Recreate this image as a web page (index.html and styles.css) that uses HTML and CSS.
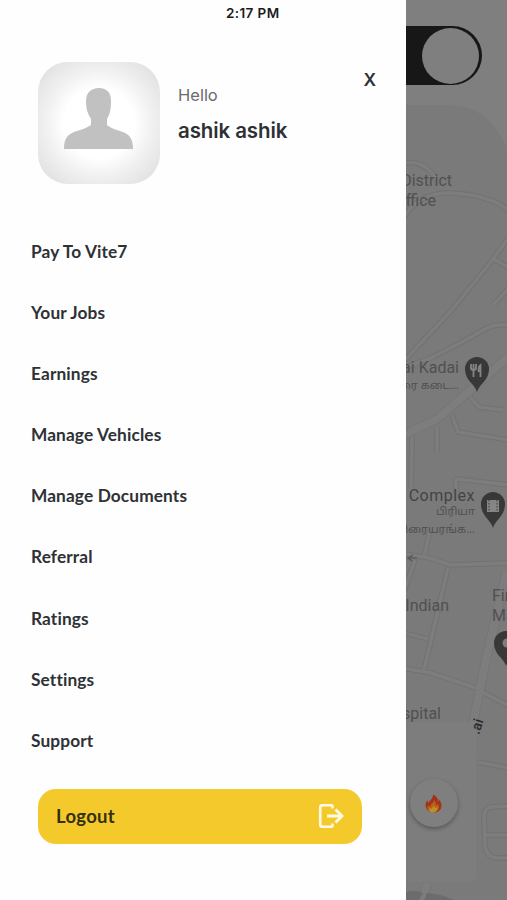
FILE: index.html
```
<!DOCTYPE html>
<html lang="en">
<head>
<meta charset="utf-8">
<title>Menu</title>
<link rel="stylesheet" href="styles.css">
</head>
<body>
<div class="screen">
  <aside class="drawer">
    <div class="status">2:17 PM</div>
    <header class="profile">
      <svg class="avatar" viewBox="0 0 122 122">
        <defs><radialGradient id="glow" r="0.6"><stop offset="0.48" stop-color="#fff"/><stop offset="0.7" stop-color="#f2f2f2"/><stop offset="1" stop-color="#e3e3e3"/></radialGradient></defs>
        <rect width="122" height="122" rx="30" fill="url(#glow)"/>
        <path fill="#c1c1c1" d="M61 26c8 0 12 5 12 13 0 8-1 13-4 18v6c3 3 10 5 16 7 7 3 10 7 10 17H26c0-10 3-14 10-17 6-2 13-4 17-7v-6c-3-5-5-10-5-18 0-8 5-13 13-13z"/>
      </svg>
      <div class="who">
        <span class="hello">Hello</span>
        <span class="name">ashik ashik</span>
      </div>
      <button class="close">X</button>
    </header>
    <nav class="menu">
      <a class="item">Pay To Vite7</a>
      <a class="item">Your Jobs</a>
      <a class="item">Earnings</a>
      <a class="item">Manage Vehicles</a>
      <a class="item">Manage Documents</a>
      <a class="item">Referral</a>
      <a class="item">Ratings</a>
      <a class="item">Settings</a>
      <a class="item">Support</a>
    </nav>
    <button class="logout">
      <span>Logout</span>
      <svg class="exit" viewBox="0 0 26 26" fill="none" stroke="#fffbe6" stroke-width="2.8">
        <path d="M14.5 2.2H4.5Q2.2 2.2 2.2 4.5v17q0 2.300 2.300 2.300h10M14.500 2v3.500M14.500 24v-3.500" stroke-width="2.600"/>
        <path d="M9 13h15M17.500 6.500 24 13l-6.500 6.500"/>
      </svg>
    </button>
  </aside>
  <main class="backdrop">
    <svg class="map" viewBox="406 0 101 900">
      <defs>
        <g id="roads" fill="none" stroke-linejoin="round">
          <path d="M404 163q22-3 32 17M404 217q14-23 43-24 28 1 39 6 16 4 24 14"/>
          <path d="M404 361 450 312 490 263 510 236M494 259l15 9M493 305l16-17"/>
          <path d="M404 368l29-11 27-14 27-15q8-4 22-3"/>
          <path d="M470 397l9 10 24 3M452 415l6 17 51 8M437 427v26M412 437l-1 50"/>
          <path d="M456 494v-15l53 6M404 554l26 4 20 7 59-2M430 530l-6 27M415 560l-11 31M448 568l-24 102M404 633l24 6"/>
          <path d="M404 668l27 5 42 14 36 19M478 762l31 6"/>
          <path d="M509 806l-17 1q-7 0-8 8l1 30q1 12 11 13h13M486 835h23"/>
        </g>
        <g id="avenues" fill="none">
          <path d="M404 435l33-16 30-26 23-20 19-17M507 570l-20 85-17 83M428 883l-8 20"/>
        </g>
      </defs>
      <rect x="406" width="101" height="900" fill="#7f7f7f"/>
      <path d="M406 105h41q42 0 60 43v752H406z" fill="#7a7a7a"/>
      <use href="#roads" stroke="#727272" stroke-width="5.500"/>
      <use href="#avenues" stroke="#747474" stroke-width="9.500"/>
      <use href="#roads" stroke="#7d7d7d" stroke-width="3.500"/>
      <use href="#avenues" stroke="#7d7d7d" stroke-width="8"/>
      <path d="M406 722h62q8 0 8 8v144q0 8-8 8h-62z" fill="#7d7d7d"/>
      <path d="M406 892q10-3 17 1l-4 7h-13zM427 893q14 1 27 7h-30z" fill="#6c6c6c"/>
      <g class="label">
        <text x="452" y="186" text-anchor="end">District</text>
        <text x="436" y="206" text-anchor="end">Office</text>
        <text x="459" y="373" text-anchor="end">ai Kadai</text>
        <text x="475" y="501" text-anchor="end" class="strong">Complex</text>
        <text x="449" y="611" text-anchor="end">Indian</text>
        <text x="492" y="601">Fire</text>
        <text x="492" y="621">Ma</text>
        <text x="441" y="719" text-anchor="end">spital</text>
      </g>
      <g class="tamil">
        <text x="459" y="389" text-anchor="end">ரை கடை...</text>
        <text x="475" y="515" text-anchor="end">பிரியா</text>
        <text x="475" y="533" text-anchor="end">திரையரங்க...</text>
      </g>
      <path d="M417 558h-9l5-3m-5 3 4 3" fill="none" stroke="#555" stroke-width="1.200"/>
      <text class="street" transform="translate(479 735) rotate(-72)">.ai</text>
      <g fill="#383838">
        <path d="M477 392c-2-8-12-11-12-23a12 12 0 0 1 24 0c0 12-10 15-12 23z"/>
        <path d="M493 528c-2-8-12-12-12-24a12 12 0 0 1 24 0c0 12-10 16-12 24z"/>
        <path d="M506 666c-2-8-12-11-12-23a12 12 0 0 1 24 0c0 12-10 15-12 23z"/>
      </g>
      <path d="M473.500 364v13M471 364v4q0 2 2.500 2t2.500-2v-4M480.500 377v-12q-2 1-2 6h2" fill="none" stroke="#858585" stroke-width="1.800"/>
      <path d="M487 500h12v12h-12z" fill="#858585"/>
      <path d="M489 500v12M497 500v12" stroke="#383838" stroke-dasharray="1.500 1.500"/>
      <circle cx="507" cy="643" r="4.500" fill="#7d7d7d"/>
    </svg>
    <div class="toggle"><span class="knob"></span></div>
    <div class="fab">
      <svg class="fire" viewBox="0 0 20 20">
        <path fill="#a33218" d="M9 0c4 2 6 5 5 8 1 0 1-1 1-3 3 3 4 6 3 10-1 3-4 5-8 5s-8-2-9-6c-1-3 0-6 2-8 0 2 0 3 1 3 2-3 5-5 5-9z"/>
        <path fill="#b9601b" d="M10 6c3 3 2 5 2 6 1 0 2-1 2-2 3 4 1 10-5 10-5 0-7-4-6-8 1 1 2 2 3 1 0-3 4-4 4-7z"/>
        <path fill="#b99128" d="M10 12c0 2 1 2 2 3l2-1c0 4-2 6-5 6s-5-2-4-5l2 1c1-1 2-2 3-4z"/>
      </svg>
    </div>
  </main>
</div>
</body>
</html>
```
FILE: styles.css
```
* { box-sizing: border-box; }
body { margin: 0; background: #fff; }
button { border: 0; padding: 0; background: none; font: inherit; color: inherit; }
.screen { display: flex; width: 507px; height: 900px; overflow: hidden; }
.drawer {
  flex: 0 0 406px;
  display: flex;
  flex-direction: column;
  background: #fefefe;
  color: #2e3135;
  font-family: Lato, sans-serif;
  font-weight: 700;
}
.status {
  height: 28px;
  padding-left: 226px;
  font: 600 13.500px/27px Inter, sans-serif;
  letter-spacing: .4px;
  color: #1c1c1c;
}
.profile { display: flex; padding: 34px 30px 0 38px; height: 193px; }
.avatar { width: 122px; height: 122px; }
.who { display: flex; flex-direction: column; padding: 22px 0 0 18px; flex: 1; }
.hello { font: 400 16.500px/23px Inter, sans-serif; color: #6b6b6b; }
.name { font: 600 20.500px/26px Inter, sans-serif; margin-top: 11px; letter-spacing: -.1px; }
.close { height: 20px; margin-top: 8px; font: 600 17.500px/20px Inter, sans-serif; }
.menu { display: flex; flex-direction: column; padding-left: 31px; }
.item { height: 61.100px; font-size: 17.300px; line-height: 61px; letter-spacing: .12px; }
.logout {
  display: flex;
  align-items: center;
  justify-content: space-between;
  width: 324px;
  height: 55px;
  margin: 18px 0 0 38px;
  padding: 0 18px;
  border-radius: 18px;
  background: #f4c92b;
  color: #35300f;
  font-size: 18.500px;
  letter-spacing: .3px;
}
.exit { width: 26px; height: 26px; }
.backdrop { position: relative; flex: 0 0 101px; overflow: hidden; }
.map { display: block; width: 101px; height: 900px; }
.label { font: 400 16px Roboto, sans-serif; fill: #505050; }
.strong { fill: #444; letter-spacing: .5px; }
.tamil { font: 400 11px "Noto Sans Tamil", "Noto Sans", sans-serif; fill: #505050; }
.street { font: 500 14px Roboto, sans-serif; fill: #292929; }
.toggle {
  position: absolute;
  top: 26px;
  right: 25px;
  display: flex;
  justify-content: flex-end;
  width: 120px;
  height: 59px;
  padding: 1.500px 3px;
  border-radius: 30px;
  background: #171717;
}
.knob { width: 57px; height: 56px; border-radius: 50%; background: #7f7f7f; }
.fab {
  position: absolute;
  top: 779px;
  left: 4px;
  display: flex;
  align-items: center;
  justify-content: center;
  width: 48px;
  height: 48px;
  border-radius: 50%;
  background: #7f7f7f;
  box-shadow: 0 2px 4px rgba(0, 0, 0, .3);
}
.fire { width: 18px; height: 19px; }
```
